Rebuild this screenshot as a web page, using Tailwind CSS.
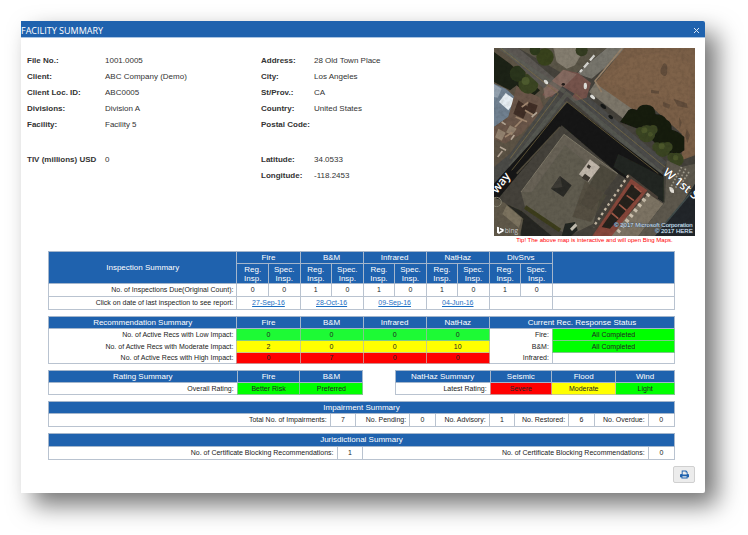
<!DOCTYPE html>
<html lang="en">
<head>
<meta charset="utf-8">
<meta name="viewport" content="width=device-width, initial-scale=1">
<title>Facility Summary</title>
<script src="https://cdn.jsdelivr.net/npm/@tailwindcss/browser@4"></script>
</head>
<body class="bg-white overflow-x-hidden pt-[21px] pb-[42px] pl-[21px] pr-[43px] font-['Liberation_Sans',Arial,sans-serif] text-[#333]">
<main role="dialog" aria-labelledby="title" class="bg-white rounded-r-xs shadow-[12px_12px_24px_rgba(0,0,0,0.55)]">
  <header class="flex items-center justify-between h-[17px] bg-[#1f62ae] border-b border-[#a9c4e2] rounded-tr-xs pr-1 text-white">
    <h1 id="title" class="font-['Open_Sans',sans-serif] text-[9px] leading-4 pt-1">FACILITY SUMMARY</h1>
    <button type="button" aria-label="Close" class="p-px pt-[3px]"><svg class="size-[7px]" viewBox="0 0 7 7" fill="none" stroke="#dbe8f6" stroke-width="1"><path d="M1 1l5 5M6 1l-5 5"/></svg></button>
  </header>

  <section class="flex justify-between pt-[10px] pl-[6px] pr-[10px]">
    <div class="flex pt-[5px] text-[8px] leading-4 whitespace-nowrap">
      <dl class="grid grid-cols-[78px_156px] auto-rows-[16px] content-start">
        <dt class="font-bold">File No.:</dt><dd>1001.0005</dd>
        <dt class="font-bold">Client:</dt><dd>ABC Company (Demo)</dd>
        <dt class="font-bold">Client Loc. ID:</dt><dd>ABC0005</dd>
        <dt class="font-bold">Divisions:</dt><dd>Division A</dd>
        <dt class="font-bold">Facility:</dt><dd>Facility 5</dd>
        <dt class="font-bold mt-[19px]">TIV (millions) USD</dt><dd class="mt-[19px]">0</dd>
      </dl>
      <dl class="grid grid-cols-[53px_100px] auto-rows-[16px] content-start">
        <dt class="font-bold">Address:</dt><dd>28 Old Town Place</dd>
        <dt class="font-bold">City:</dt><dd>Los Angeles</dd>
        <dt class="font-bold">St/Prov.:</dt><dd>CA</dd>
        <dt class="font-bold">Country:</dt><dd>United States</dd>
        <dt class="font-bold">Postal Code:</dt><dd></dd>
        <dt class="font-bold mt-[19px]">Latitude:</dt><dd class="mt-[19px]">34.0533</dd>
        <dt class="font-bold mt-[19px]">Longitude:</dt><dd class="mt-[19px]">-118.2453</dd>
      </dl>
    </div>
    <div class="w-[201px] shrink-0">
      <a href="#map" aria-label="Open Bing Maps" class="block">
      <svg class="block w-full" viewBox="27 113 603 564">
        <defs>
          <filter id="soft"><feGaussianBlur stdDeviation="2"/></filter>
          <filter id="grain" x="0" y="0" width="1" height="1"><feTurbulence type="fractalNoise" baseFrequency="0.09" numOctaves="3" seed="4"/><feColorMatrix values="0 0 0 0 0  0 0 0 0 0  0 0 0 0 0  1.6 0 0 0 -0.6"/></filter>
        </defs>
        <rect x="27" y="113" width="603" height="564" fill="#45423b"/>
        <g filter="url(#soft)">
          <!-- north-west block -->
          <path d="M27 113H50L215 245 75 445 27 480z" fill="#5c5244"/>
          <path d="M27 125L75 160 165 240 140 262 95 225 75 240 27 215z" fill="#1c2114"/>
          <path d="M27 220L62 235 92 262 70 320 27 350z" fill="#6f8090"/>
          <path d="M27 222L50 235 38 262 27 260z" fill="#95a3b0"/>
          <path d="M62 248L92 270 70 300 42 275z" fill="#e6edf2"/>
          <path d="M95 228L165 262 178 295 110 370 60 400 27 385V350L70 320z" fill="#6b5748"/>
          <path d="M100 270L130 290 115 325 85 310zM130 275l28 10-10 28-22-10z" fill="#3f2f27"/>
          <path d="M40 355l22 12-12 24-20-10zM75 345l20 10-14 20-18-9z" fill="#94836f"/>
          <path d="M110 290l20-14M92 320l34 14M120 300l26 15M60 380l22-14M90 350l20-20" stroke="#a0866f" stroke-width="5"/>
          <path d="M50 335l12 8M78 388l10-14M45 410l18 10M38 440l14-18M140 320l16-14" stroke="#b5a797" stroke-width="5"/>
          <circle cx="130" cy="220" r="30" fill="#3a4522"/><circle cx="98" cy="190" r="24" fill="#2b351b"/>
          <circle cx="122" cy="212" r="12" fill="#4d5a2d"/>
          <!-- roads -->
          <path d="M45 113H100L240 230 205 262z" fill="#5b5953"/>
          <path d="M365 113H430L320 205 275 190z" fill="#77746c"/>
          <path d="M215 235L265 250 75 470 27 520V470L75 430z" fill="#4b4b47"/>
          <path d="M225 240L280 235 545 455 520 500z" fill="#4c4b48"/>
          <!-- north block -->
          <path d="M100 113H365L270 190 225 185z" fill="#5a5547"/>
          <path d="M205 113H300L270 165 245 175 215 155z" fill="#857e70"/>
          <circle cx="180" cy="140" r="26" fill="#39431f"/><circle cx="150" cy="119" r="16" fill="#2f3a1b"/><circle cx="290" cy="120" r="18" fill="#343d20"/>
          <path d="M328 135L285 185" stroke="#dad9d4" stroke-width="7" stroke-dasharray="20 8"/>
          <!-- intersection -->
          <path d="M235 178L280 188 318 218 305 262 270 272 228 232 200 260 172 255 190 225z" fill="#74534c"/>
          <path d="M235 178L275 192 225 242 180 265 175 235z" fill="#8a7265" opacity=".8"/>
          <path d="M232 228L268 250 245 280 212 252z" fill="#454240"/>
          <path d="M45 113L240 245M75 470L245 250 530 490" stroke="#5f6059" stroke-width="12" fill="none" opacity=".6"/>
          <!-- empty lot -->
          <path d="M418 113H630V435L590 450 590 370 500 290 440 300 330 218z" fill="#7a5f47"/>
          <path d="M440 140Q540 110 620 160L610 280 480 250 350 215z" fill="#80644b" opacity=".7"/>
          <path d="M535 160q12-5 12 18t-12 18-8-20zM565 265l40 14 3 14-30-5zM535 275l22 8-6 12-18-8zM498 238l24 4v8l-24-2zM605 355l10 20-8 24-6-22zM582 320l8 16-6 22z" fill="#624d3a"/>
          <path d="M330 218L312 245 440 345 470 355 490 330z" fill="#7d776b"/>
          <path d="M412 113L330 212 350 245" stroke="#97826a" stroke-width="5" fill="none"/>
          <path d="M430 300Q440 290 456 300 460 282 485 283 510 284 512 312 535 312 545 328 562 335 560 358 580 362 598 380L598 420 560 445 470 360 405 335z" fill="#171a11"/>
          <g fill="#3a4521"><circle cx="485" cy="370" r="26"/><circle cx="466" cy="364" r="14"/><circle cx="504" cy="358" r="14"/><circle cx="533" cy="418" r="22"/><circle cx="516" cy="410" r="14"/><circle cx="548" cy="410" r="15"/><circle cx="575" cy="448" r="21"/><circle cx="560" cy="440" r="13"/></g>
          <g fill="#4b572c"><circle cx="478" cy="360" r="9"/><circle cx="496" cy="372" r="7"/><circle cx="530" cy="408" r="9"/><circle cx="572" cy="442" r="8"/></g>
          <!-- shadowed street edge -->
          <path d="M248 276L535 495V575L400 490 230 345 110 480 27 580V520z" fill="#171815"/>
          <path d="M400 430L535 500V575L385 470z" fill="#222521"/>
          <path d="M225 350L95 490" stroke="#514b3e" stroke-width="5"/>
          <!-- main roof -->
          <path d="M237 372L398 490 345 560 325 640 250 677 120 590 108 545z" fill="#615c50"/>
          <path d="M237 372L398 490 380 515 240 405 140 545 110 545z" fill="#676256"/>
          <path d="M345 460L398 492 320 600 285 580z" fill="#4e493e"/>
          <path d="M225 497L260 525 235 560 198 535z" fill="#2b2b27"/><path d="M225 497L232 530 198 535z" fill="#3d3b34"/>
          <path d="M300 512L365 555 318 635 262 620z" fill="#504b3d" opacity=".7"/>
          <path d="M315 447L345 470 310 515 282 492z" fill="#c0b6aa"/>
          <path d="M300 490l16 12-8 12-18-12zM310 462l8 6-5 8-8-6z" fill="#3a342d"/>
          <path d="M237 372L108 545M237 372L398 490" stroke="#7d7767" stroke-width="3"/>
          <path d="M120 590L225 660" stroke="#3c3e1d" stroke-width="12"/>
          <path d="M110 602L200 677H110L60 580z" fill="#272820"/>
          <path d="M27 560L60 578 115 625 105 677H27z" fill="#5f5849"/>
          <path d="M65 585l45 38-8 30-50-42z" fill="#7c735f"/>
          <circle cx="35" cy="575" r="14" fill="none" stroke="#85806f" stroke-width="3"/>
          <path d="M240 640l30-5 8 25-20 17h-28z" fill="#242720"/><path d="M255 655l16-16 6 7-16 16z" fill="#c7c2b5"/>
          <!-- red-roofed building -->
          <path d="M430 490L520 560 480 677H320z" fill="#4a4138"/>
          <path d="M490 550L535 580 460 677H370z" fill="#7c7363"/>
          <path d="M438 505L487 540 380 677H322z" fill="#87463a"/>
          <path d="M440 522L472 545 375 655 350 650z" fill="#27211c"/>
          <path d="M448 528l22 18M425 555l22 16M402 582l22 18M380 608l20 17" stroke="#a35c49" stroke-width="5"/>
          <path d="M430 495L325 650" stroke="#c5b8a4" stroke-width="7" stroke-dasharray="8 9"/>
          <path d="M492 550L395 670" stroke="#cabfac" stroke-width="12" stroke-dasharray="9 11"/>
          <!-- south-east streets -->
          <path d="M545 450L590 470 630 460V530L560 620 520 677H460L540 575z" fill="#5d594e"/>
          <path d="M630 520V677H510L590 580z" fill="#20262a"/>
          <path d="M590 470L555 535M602 475L572 532M612 485L586 525" stroke="#a19b8c" stroke-width="5" stroke-dasharray="5 5"/>
          <path d="M620 545L540 640" stroke="#434e4d" stroke-width="5"/>
          <path d="M555 530q14 2 12 18-14 2-14-18z" fill="#e2ded6"/>
        </g>
        <g fill="none" stroke="#827347" stroke-width="2">
          <path d="M48 114L220 250 75 445M80 480L245 274 520 490M270 250L540 470"/>
        </g>
        <g fill="#deded9"><ellipse cx="183" cy="215" rx="8" ry="5" transform="rotate(45 183 215)"/><ellipse cx="301" cy="227" rx="5" ry="10"/><ellipse cx="235" cy="222" rx="5" ry="4" fill="#241c1a"/><ellipse cx="323" cy="260" rx="9" ry="5" transform="rotate(38 323 260)"/></g>
        <g fill="#161817"><ellipse cx="355" cy="288" rx="10" ry="5" transform="rotate(38 355 288)"/><ellipse cx="377" cy="320" rx="8" ry="5" transform="rotate(38 377 320)"/></g>
        <rect x="27" y="113" width="603" height="564" filter="url(#grain)" opacity=".12"/>
        <g font-family="'Open Sans',sans-serif" font-weight="600" fill="#fff" stroke="#222" stroke-width="2" paint-order="stroke">
          <text x="36" y="551" font-size="35" transform="rotate(-52 36 551)">way</text>
          <text x="532" y="490" font-size="36" transform="rotate(39 532 490)">W 1st S</text>
        </g>
        <path d="M36 649l6 2v14l9-5-5-2-2-6 12 5v6l-14 8-6-4z" fill="#fff"/>
        <text x="59" y="669" font-family="'Open Sans',sans-serif" font-size="20" fill="#c4c4c4">bing</text>
        <g font-family="'Liberation Sans',Arial,sans-serif" font-size="18" text-anchor="end" fill="#dfe8f0" stroke="#3c5068" stroke-width="2" paint-order="stroke">
          <text x="623" y="649">© 2017 Microsoft Corporation</text>
          <text x="623" y="669">© 2017 HERE</text>
        </g>
      </svg></a>
      <p class="text-center text-[6px] leading-[9px] text-[#f00] whitespace-nowrap">Tip! The above map is interactive and will open Bing Maps.</p>
    </div>
  </section>

  <section class="flex flex-col gap-[6px] pt-[6px] pl-[27px] pr-[30px] text-[7px] leading-[10px] whitespace-nowrap text-[#222]">
    <table class="w-full table-fixed border-collapse text-center [&_th]:bg-[#1f62ae] [&_th]:text-white [&_th]:text-[8px] [&_th]:font-normal [&_th]:border [&_th]:border-[#a4b6cc] [&_td]:border [&_td]:border-[#b9c3d0]">
      <colgroup><col class="w-[30.1%]"><col class="w-[5.04%]" span="10"><col></colgroup>
      <thead>
        <tr class="h-[12px]"><th rowspan="2">Inspection Summary</th><th colspan="2">Fire</th><th colspan="2">B&amp;M</th><th colspan="2">Infrared</th><th colspan="2">NatHaz</th><th colspan="2">DivSrvs</th><th rowspan="2"></th></tr>
        <tr class="h-[20px] leading-[9px]"><th>Reg.<br>Insp.</th><th>Spec.<br>Insp.</th><th>Reg.<br>Insp.</th><th>Spec.<br>Insp.</th><th>Reg.<br>Insp.</th><th>Spec.<br>Insp.</th><th>Reg.<br>Insp.</th><th>Spec.<br>Insp.</th><th>Reg.<br>Insp.</th><th>Spec.<br>Insp.</th></tr>
      </thead>
      <tbody>
        <tr class="h-[13px]"><td class="text-right pr-[3px]">No. of Inspections Due(Original Count):</td><td>0</td><td>0</td><td>1</td><td>0</td><td>1</td><td>0</td><td>1</td><td>0</td><td>1</td><td>0</td><td></td></tr>
        <tr class="h-[13px] [&_a]:text-[#1b6ec2] [&_a]:underline"><td class="text-right pr-[3px]">Click on date of last inspection to see report:</td><td colspan="2"><a href="#r1">27-Sep-16</a></td><td colspan="2"><a href="#r2">28-Oct-16</a></td><td colspan="2"><a href="#r3">09-Sep-16</a></td><td colspan="2"><a href="#r4">04-Jun-16</a></td><td colspan="2"></td><td></td></tr>
      </tbody>
    </table>

    <table class="w-full table-fixed border-collapse border border-[#b9c3d0] text-center [&_th]:bg-[#1f62ae] [&_th]:text-white [&_th]:text-[8px] [&_th]:font-normal [&_th]:border [&_th]:border-[#a4b6cc]">
      <colgroup><col class="w-[30.1%]"><col class="w-[10.08%]" span="5"><col></colgroup>
      <thead><tr class="h-[12px]"><th>Recommendation Summary</th><th>Fire</th><th>B&amp;M</th><th>Infrared</th><th>NatHaz</th><th colspan="2">Current Rec. Response Status</th></tr></thead>
      <tbody>
        <tr class="h-[12px]"><td class="text-right pr-[3px]">No. of Active Recs with Low Impact:</td><td class="bg-[#1dfa35] border border-[#7fc98a]">0</td><td class="bg-[#1dfa35] border border-[#7fc98a]">0</td><td class="bg-[#1dfa35] border border-[#7fc98a]">0</td><td class="bg-[#1dfa35] border border-[#7fc98a]">0</td><td class="text-right pr-[3px]">Fire:</td><td class="bg-[#0f0] border border-[#7fc98a]">All Completed</td></tr>
        <tr class="h-[12px]"><td class="text-right pr-[3px]">No. of Active Recs with Moderate Impact:</td><td class="bg-[#ff0] border border-[#c9c98a]">2</td><td class="bg-[#ff0] border border-[#c9c98a]">0</td><td class="bg-[#ff0] border border-[#c9c98a]">0</td><td class="bg-[#ff0] border border-[#c9c98a]">10</td><td class="text-right pr-[3px]">B&amp;M:</td><td class="bg-[#0f0] border border-[#7fc98a]">All Completed</td></tr>
        <tr class="h-[11px]"><td class="text-right pr-[3px]">No. of Active Recs with High Impact:</td><td class="bg-[#f00] border border-[#d08a8a]">0</td><td class="bg-[#f00] border border-[#d08a8a]">7</td><td class="bg-[#f00] border border-[#d08a8a]">0</td><td class="bg-[#f00] border border-[#d08a8a]">0</td><td class="text-right pr-[3px]">Infrared:</td><td class="border border-[#b9c3d0]"></td></tr>
      </tbody>
    </table>

    <div class="grid grid-cols-[315fr_280fr] gap-x-[5%]">
      <table class="w-full table-fixed border-collapse border border-[#b9c3d0] text-center [&_th]:bg-[#1f62ae] [&_th]:text-white [&_th]:text-[8px] [&_th]:font-normal [&_th]:border [&_th]:border-[#a4b6cc]">
        <colgroup><col class="w-[60%]"><col class="w-[20%]"><col class="w-[20%]"></colgroup>
        <thead><tr class="h-[12px]"><th>Rating Summary</th><th>Fire</th><th>B&amp;M</th></tr></thead>
        <tbody><tr class="h-[12px]"><td class="text-right pr-[3px]">Overall Rating:</td><td class="bg-[#0f0] border border-[#7fc98a]">Better Risk</td><td class="bg-[#0f0] border border-[#7fc98a]">Preferred</td></tr></tbody>
      </table>
      <table class="w-full table-fixed border-collapse border border-[#b9c3d0] text-center [&_th]:bg-[#1f62ae] [&_th]:text-white [&_th]:text-[8px] [&_th]:font-normal [&_th]:border [&_th]:border-[#a4b6cc]">
        <colgroup><col class="w-[34%]"><col class="w-[22%]"><col class="w-[23%]"><col class="w-[21%]"></colgroup>
        <thead><tr class="h-[12px]"><th>NatHaz Summary</th><th>Seismic</th><th>Flood</th><th>Wind</th></tr></thead>
        <tbody><tr class="h-[12px]"><td class="text-right pr-[3px]">Latest Rating:</td><td class="bg-[#f00] border border-[#d08a8a]">Severe</td><td class="bg-[#ff0] border border-[#c9c98a]">Moderate</td><td class="bg-[#0f0] border border-[#7fc98a]">Light</td></tr></tbody>
      </table>
    </div>

    <table class="w-full table-fixed border-collapse text-center [&_th]:bg-[#1f62ae] [&_th]:text-white [&_th]:text-[8px] [&_th]:font-normal [&_th]:border [&_th]:border-[#a4b6cc] [&_td]:border [&_td]:border-[#b9c3d0]">
      <colgroup><col class="w-[45%]"><col class="w-[4.1%]"><col class="w-[8.6%]"><col class="w-[4.1%]"><col class="w-[8.6%]"><col class="w-[4.1%]"><col class="w-[8.6%]"><col class="w-[4.1%]"><col class="w-[8.6%]"><col></colgroup>
      <thead><tr class="h-[12px]"><th colspan="10">Impairment Summary</th></tr></thead>
      <tbody><tr class="h-[13px]"><td class="text-right pr-[3px]">Total No. of Impairments:</td><td>7</td><td class="text-right pr-[3px]">No. Pending:</td><td>0</td><td class="text-right pr-[3px]">No. Advisory:</td><td>1</td><td class="text-right pr-[3px]">No. Restored:</td><td>6</td><td class="text-right pr-[3px]">No. Overdue:</td><td>0</td></tr></tbody>
    </table>

    <table class="w-full table-fixed border-collapse text-center [&_th]:bg-[#1f62ae] [&_th]:text-white [&_th]:text-[8px] [&_th]:font-normal [&_th]:border [&_th]:border-[#a4b6cc] [&_td]:border [&_td]:border-[#b9c3d0]">
      <colgroup><col class="w-[46.1%]"><col class="w-[4.1%]"><col class="w-[45.6%]"><col></colgroup>
      <thead><tr class="h-[13px]"><th colspan="4">Jurisdictional Summary</th></tr></thead>
      <tbody><tr class="h-[13px]"><td class="text-right pr-[3px]">No. of Certificate Blocking Recommendations:</td><td>1</td><td class="text-right pr-[3px]">No. of Certificate Blocking Recommendations:</td><td>0</td></tr></tbody>
    </table>
  </section>

  <footer class="flex justify-end pt-[6px] pb-[10px] pr-[10px]">
    <button type="button" aria-label="Print" class="flex items-center justify-center w-[22px] h-[17px] rounded-xs border border-[#d0d0d0] bg-[#ececec]">
      <svg class="size-[9px]" viewBox="0 0 16 16"><path d="M3 1h8l2.500 2.500V7H15l1 1.500V13h-2.500v2h-11v-2H0V8.500L1 7h2z" fill="#1f62ae"/><path d="M4.700 2.600H10V4.500h2V8H4.700zM4.300 11h7.400v2.500H4.300z" fill="#ececec"/></svg>
    </button>
  </footer>
</main>
</body>
</html>
